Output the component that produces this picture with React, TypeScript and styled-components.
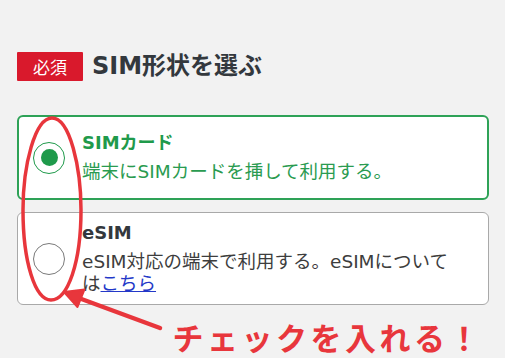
import React from "react";
import styled, { createGlobalStyle } from "styled-components";

const GlobalStyle = createGlobalStyle`
  html, body {
    margin: 0;
    padding: 0;
    background: #f2f2f2;
  }
  body {
    font-family: "DejaVu Sans", "Noto Sans CJK JP", sans-serif;
  }
  * { box-sizing: border-box; }
`;

const GREEN = "#1f9a4b";
const RED = "#e8363c";

const Page = styled.div`
  position: relative;
  width: 505px;
  height: 358px;
  overflow: hidden;
  padding: 52px 16px 0 17px;
  background: #f2f2f2;
`;

const Heading = styled.div`
  display: flex;
  align-items: center;
  gap: 9px;
  margin-bottom: 34px;
`;

const Badge = styled.span`
  display: inline-flex;
  align-items: center;
  justify-content: center;
  width: 66px;
  height: 29px;
  background: #d9192c;
  color: #fff;
  font-family: "Noto Sans CJK JP", sans-serif;
  font-size: 17px;
  line-height: 1;
  border-radius: 1px;
`;

const Title = styled.h2`
  margin: 0;
  font-size: 24px;
  font-weight: 700;
  line-height: 29px;
  color: #33383d;
`;

const Options = styled.div`
  display: flex;
  flex-direction: column;
  gap: 12px;
`;

const Card = styled.label<{ $selected?: boolean }>`
  display: flex;
  align-items: center;
  gap: 17px;
  min-height: ${(p) => (p.$selected ? "85px" : "90px")};
  padding: 9px 16px 9px ${(p) => (p.$selected ? "14px" : "15px")};
  background: #fff;
  border: ${(p) => (p.$selected ? `2px solid #2ea257` : "1px solid #a9a9a9")};
  border-radius: 6px;
`;

const Radio = styled.span<{ $checked?: boolean }>`
  flex: none;
  width: 32px;
  height: 32px;
  border-radius: 50%;
  background: #fff;
  border: ${(p) => (p.$checked ? `1px solid ${GREEN}` : "1.5px solid #7a7a7a")};
  display: flex;
  align-items: center;
  justify-content: center;
  &::after {
    content: "";
    display: ${(p) => (p.$checked ? "block" : "none")};
    width: 17px;
    height: 17px;
    border-radius: 50%;
    background: ${GREEN};
  }
`;

const OptionText = styled.div`
  display: flex;
  flex-direction: column;
  gap: 7px;
  flex: 1;
`;

const OptionTitle = styled.div<{ $selected?: boolean }>`
  font-size: 18px;
  font-weight: 700;
  line-height: 22px;
  color: ${(p) => (p.$selected ? GREEN : "#33383d")};
`;

const OptionDesc = styled.div<{ $selected?: boolean }>`
  font-size: 18.5px;
  line-height: 22px;
  color: ${(p) => (p.$selected ? "#2a9b50" : "#3d3d3d")};
`;

const Link = styled.a`
  color: #2338c8;
  text-decoration: underline;
`;

const Callout = styled.div`
  display: flex;
  justify-content: flex-end;
  padding-right: 6px;
  margin-top: 16px;
  font-family: "Noto Sans CJK JP", sans-serif;
  font-weight: 700;
  font-size: 31px;
  letter-spacing: 3.5px;
  line-height: 32px;
  color: ${RED};
`;

const Overlay = styled.svg`
  position: absolute;
  left: 0;
  top: 0;
  pointer-events: none;
`;

export default function App() {
  return (
    <>
      <GlobalStyle />
      <Page>
        <Heading>
          <Badge>必須</Badge>
          <Title>SIM形状を選ぶ</Title>
        </Heading>
        <Options>
          <Card $selected>
            <Radio $checked />
            <OptionText>
              <OptionTitle $selected>SIMカード</OptionTitle>
              <OptionDesc $selected>端末にSIMカードを挿して利用する。</OptionDesc>
            </OptionText>
          </Card>
          <Card>
            <Radio />
            <OptionText>
              <OptionTitle>eSIM</OptionTitle>
              <OptionDesc>
                eSIM対応の端末で利用する。eSIMについて
                <br />
                は<Link href="#">こちら</Link>
              </OptionDesc>
            </OptionText>
          </Card>
        </Options>
        <Callout>チェックを入れる！</Callout>
        <Overlay width="505" height="358" viewBox="0 0 505 358">
          <path
            d="M52 118 C70 118 81 168 81 210 C81 262 68 300 51 300 C35 300 23 262 23 210 C23 165 35 118 52 118 Z"
            fill="none"
            stroke={RED}
            strokeWidth="3.5"
          />
          <line x1="160" y1="328" x2="76" y2="297" stroke={RED} strokeWidth="4.5" strokeLinecap="round" />
          <polygon points="64,292 84.5,289.5 77.5,307" fill={RED} stroke={RED} strokeWidth="2" strokeLinejoin="round" />
        </Overlay>
      </Page>
    </>
  );
}
